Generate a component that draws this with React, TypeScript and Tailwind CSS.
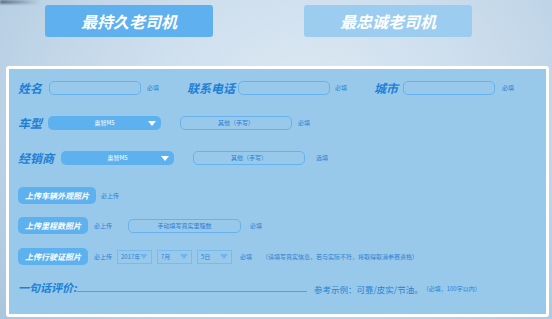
import { ReactNode } from 'react';

const CJK = "font-['Noto_Sans_CJK_SC','Noto_Sans',sans-serif]";

function Label({ children, w }: { children: ReactNode; w: string }) {
  return (
    <span
      className={`${w} shrink-0 text-[12px] leading-none font-bold italic text-[#1e7fd6] whitespace-nowrap ${CJK}`}
    >
      {children}
    </span>
  );
}

function Hint({ children, className = '' }: { children: ReactNode; className?: string }) {
  return (
    <span className={`shrink-0 text-[6px] leading-none text-[#2b82d4] whitespace-nowrap ${CJK} ${className}`}>
      {children}
    </span>
  );
}

function TextBox({ w, text, className = '' }: { w: string; text?: string; className?: string }) {
  return (
    <div
      className={`${w} h-[14px] shrink-0 rounded-[5px] border border-[#67b2ee] flex items-center justify-center ${className}`}
    >
      {text && <span className={`text-[6px] leading-none text-[#2b82d4] whitespace-nowrap ${CJK}`}>{text}</span>}
    </div>
  );
}

function Caret({ color }: { color: string }) {
  return (
    <svg width="8" height="5" viewBox="0 0 8 5">
      <path d="M0 0 L8 0 L4 5 Z" fill={color} />
    </svg>
  );
}

function BlueSelect({ className = '' }: { className?: string }) {
  return (
    <div
      className={`w-[113px] h-[14px] shrink-0 rounded-[5px] bg-[#5db1ee] relative flex items-center justify-center ${className}`}
    >
      <span className={`text-[6px] leading-none text-white ${CJK}`}>奥智M5</span>
      <span className="absolute right-[5px] top-[5px] flex">
        <Caret color="#ffffff" />
      </span>
    </div>
  );
}

function DateSelect({ text, className = '' }: { text: string; className?: string }) {
  return (
    <div
      className={`w-[35px] h-[14px] shrink-0 border border-[#78bbef] flex items-center justify-between pl-[3px] pr-[3px] ${className}`}
    >
      <span className={`text-[6px] leading-none text-[#2b82d4] whitespace-nowrap ${CJK}`}>{text}</span>
      <Caret color="#6fb4ec" />
    </div>
  );
}

function UploadButton({ w, children }: { w: string; children: ReactNode }) {
  return (
    <div
      className={`${w} h-[17px] shrink-0 rounded-[5px] bg-[#5db1ee] flex items-center justify-center`}
    >
      <span className={`text-[8px] leading-none font-bold italic text-white whitespace-nowrap ${CJK}`}>
        {children}
      </span>
    </div>
  );
}

export default function App() {
  return (
    <div className="w-[552px] h-[319px] overflow-hidden relative bg-[radial-gradient(ellipse_at_55%_30%,#dde9f3_0%,#cadcec_45%,#a9c6de_100%)]">
      <div className="absolute left-0 top-0 w-[40px] h-[4px] bg-[linear-gradient(90deg,#5a6e82,rgba(90,110,130,0))] blur-[1px]" />

      <div className="flex pt-[5px] h-[66px]">
        <div className="ml-[45px] w-[168px] h-[32px] rounded-[3px] bg-[#5eb1ee] flex items-center justify-center">
          <span className={`text-[16px] leading-none font-bold italic text-white ${CJK}`}>最持久老司机</span>
        </div>
        <div className="ml-[91px] w-[168px] h-[32px] rounded-[3px] bg-[#9ccdf0] flex items-center justify-center">
          <span className={`text-[16px] leading-none font-bold italic text-white ${CJK}`}>最忠诚老司机</span>
        </div>
      </div>

      <div className="ml-[6px] w-[543px] h-[251px] rounded-[3px] border-[3px] border-white bg-[#98c9eb] pl-[9px] pt-[11px] flex flex-col">
        {/* row 1 */}
        <div className="flex items-center h-[16px]">
          <Label w="w-[31px]">姓名</Label>
          <TextBox w="w-[92px]" />
          <Hint className="ml-[6px]">必填</Hint>
          <span className="ml-[28px]" />
          <Label w="w-[51px]">联系电话</Label>
          <TextBox w="w-[92px]" />
          <Hint className="ml-[5px]">必填</Hint>
          <span className="ml-[27px]" />
          <Label w="w-[29px]">城市</Label>
          <TextBox w="w-[92px]" />
          <Hint className="ml-[7px]">必填</Hint>
        </div>

        {/* row 2 */}
        <div className="flex items-center h-[16px] mt-[19px]">
          <Label w="w-[30px]">车型</Label>
          <BlueSelect />
          <TextBox w="w-[112px]" text="其他（手写）" className="ml-[19px]" />
          <Hint className="ml-[6px]">必填</Hint>
        </div>

        {/* row 3 */}
        <div className="flex items-center h-[16px] mt-[19px]">
          <Label w="w-[43px]">经销商</Label>
          <BlueSelect />
          <TextBox w="w-[112px]" text="其他（手写）" className="ml-[19px]" />
          <Hint className="ml-[11px]">选填</Hint>
        </div>

        {/* row 4 */}
        <div className="flex items-center h-[17px] mt-[21px]">
          <UploadButton w="w-[78px]">上传车辆外观照片</UploadButton>
          <Hint className="ml-[5px]">必上传</Hint>
        </div>

        {/* row 5 */}
        <div className="flex items-center h-[17px] mt-[13px]">
          <UploadButton w="w-[70px]">上传里程数照片</UploadButton>
          <Hint className="ml-[6px]">必上传</Hint>
          <TextBox w="w-[113px]" text="手动填写真实里程数" className="ml-[16px]" />
          <Hint className="ml-[9px]">必填</Hint>
        </div>

        {/* row 6 */}
        <div className="flex items-center h-[17px] mt-[14px]">
          <UploadButton w="w-[70px]">上传行驶证照片</UploadButton>
          <Hint className="ml-[6px]">必上传</Hint>
          <DateSelect text="2017年" className="ml-[5px]" />
          <DateSelect text="7月" className="ml-[5px]" />
          <DateSelect text="5日" className="ml-[5px]" />
          <Hint className="ml-[8px]">必填</Hint>
          <Hint className="ml-[10px]">（请填写真实信息，若与实际不符，将取得取消参赛资格）</Hint>
        </div>

        {/* row 7 */}
        <div className="flex items-end h-[16px] mt-[12px]">
          <span className={`w-[59px] shrink-0 text-[11px] leading-none font-bold italic text-[#1e7fd6] whitespace-nowrap ${CJK}`}>
            一句话评价:
          </span>
          <div className="w-[230px] h-[1px] bg-[#4da1e6] mb-[1px] shrink-0" />
          <span className={`ml-[7px] text-[8.5px] leading-none text-[#2b82d4] whitespace-nowrap ${CJK}`}>
            参考示例：可靠/皮实/节油。
          </span>
          <Hint className="mb-[1px]">（必填，100字以内）</Hint>
        </div>
      </div>
    </div>
  );
}
